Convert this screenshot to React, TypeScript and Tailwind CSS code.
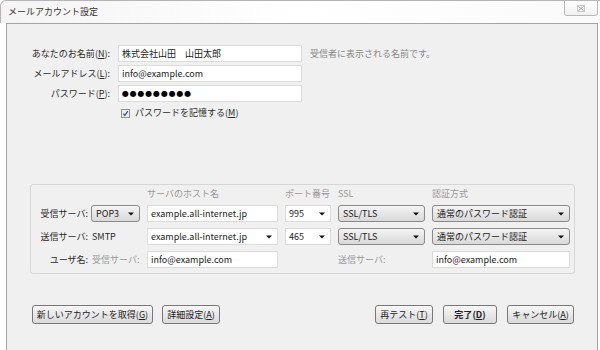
import React from 'react';

const font = "font-['Noto_Sans_CJK_JP','Noto_Sans',sans-serif]";

function Arrow() {
  return (
    <svg width="6" height="4" viewBox="0 0 6 4" className="shrink-0">
      <path d="M0 0.5h6L3 3.5z" fill="#111" />
    </svg>
  );
}

function Key({ k }: { k: string }) {
  return (
    <>
      (<span className="underline">{k}</span>)
    </>
  );
}

function Btn({ children, w, bold }: { children: React.ReactNode; w: string; bold?: boolean }) {
  return (
    <div
      className={`flex h-[19px] items-center justify-center rounded-[3px] border border-[#777] bg-linear-to-b from-[#f7f7f7] to-[#dadada] text-[9px] text-[#222] ${w} ${
        bold ? 'font-bold' : ''
      }`}
    >
      {children}
    </div>
  );
}

function DropBtn({ label }: { label: string }) {
  return (
    <div className="flex h-[17px] items-center justify-between rounded-[3px] border border-[#8a8a8a] bg-linear-to-b from-[#f4f4f4] to-[#d9d9d9] pl-[4px] pr-[5px] text-[9px] text-[#222]">
      <span>{label}</span>
      <Arrow />
    </div>
  );
}

function DropField({ label }: { label: string }) {
  return (
    <div className="flex h-[17px] items-center justify-between border border-[#dcdcdc] bg-white pl-[3px] pr-[5px] text-[9px] text-[#222]">
      <span>{label}</span>
      <Arrow />
    </div>
  );
}

function Field({ children }: { children: React.ReactNode }) {
  return (
    <div className="flex h-[17px] items-center border border-[#dcdcdc] bg-white pl-[3px] text-[9px] text-[#222]">
      {children}
    </div>
  );
}

export default function App() {
  return (
    <div className={`flex h-[350px] w-[600px] flex-col overflow-hidden bg-white ${font}`}>
      {/* title bar */}
      <div className="relative h-[23px] shrink-0 rounded-tl-[6px] border-l border-t border-[#b4b4b4] bg-linear-to-r from-[#f4f4f4] via-white to-[#fafafa]">
        <span className="absolute left-[7px] top-[5px] text-[9px] leading-[11px] text-[#333]">メールアカウント設定</span>
        <div className="absolute right-[2px] top-[-1px] flex h-[16px] w-[34px] items-center justify-center rounded-b-[3px] border border-[#b8b8b8] bg-linear-to-b from-white to-[#f1f1f1]">
          <svg width="8" height="7" viewBox="0 0 8 7">
            <rect x="0.5" y="0.5" width="7" height="6" fill="none" stroke="#c8c8c8" />
            <path d="M1.5 1.5l5 4M6.5 1.5l-5 4" stroke="#a8a8a8" strokeWidth="1" />
          </svg>
        </div>
      </div>

      {/* content panel */}
      <div className="ml-[6px] mr-[2px] h-[340px] shrink-0 border border-[#a4a4a4] bg-[#f0f0f0] text-[#2a2a2a]">
        <div className="grid grid-cols-[103px_184px_auto] items-center gap-x-[8px] gap-y-[3px] pt-[21px] text-[9px]">
          <span className="text-right">
            あなたのお名前<Key k="N" />:
          </span>
          <Field>株式会社山田　山田太郎</Field>
          <span className="text-[#888]">受信者に表示される名前です。</span>

          <span className="text-right">
            メールアドレス<Key k="L" />:
          </span>
          <Field>info@example.com</Field>
          <span />

          <span className="text-right">
            パスワード<Key k="P" />:
          </span>
          <Field>
            <span className="font-['DejaVu_Sans',sans-serif] text-[8px] tracking-[0.8px] text-black">●●●●●●●●●</span>
          </Field>
          <span />
        </div>

        <div className="mt-[5px] flex h-[12px] items-center gap-[5px] pl-[114px] text-[9px]">
          <svg width="9" height="9" viewBox="0 0 9 9">
            <rect x="0.5" y="0.5" width="8" height="8" fill="#e9edf2" stroke="#8f8f8f" />
            <path d="M2.3 4.6l1.5 1.8L6.8 2.2" fill="none" stroke="#3b4f86" strokeWidth="1.2" />
          </svg>
          <span>
            パスワードを記憶する<Key k="M" />
          </span>
        </div>

        {/* server settings */}
        <div className="ml-[23px] mt-[65px] w-[545px] rounded-[3px] border border-[#d6d6d6] pb-[5px] pt-[4px]">
          <div className="grid grid-cols-[53px_49px_131px_46px_87px_138px] items-center gap-x-[7px] gap-y-[6px] text-[9px]">
            <span className="h-[10px]" />
            <span />
            <span className="leading-[10px] text-[#999]">サーバのホスト名</span>
            <span className="leading-[10px] text-[#999]">ポート番号</span>
            <span className="leading-[10px] text-[#999]">SSL</span>
            <span className="leading-[10px] text-[#999]">認証方式</span>

            <span className="-mr-[4px] text-right">受信サーバ:</span>
            <DropBtn label="POP3" />
            <Field>example.all-internet.jp</Field>
            <DropField label="995" />
            <DropBtn label="SSL/TLS" />
            <DropBtn label="通常のパスワード認証" />

            <span className="-mr-[4px] text-right">送信サーバ:</span>
            <span className="pl-[1px]">SMTP</span>
            <DropField label="example.all-internet.jp" />
            <DropField label="465" />
            <DropBtn label="SSL/TLS" />
            <DropBtn label="通常のパスワード認証" />

            <span className="-mr-[4px] text-right">ユーザ名:</span>
            <span className="pl-[1px] text-[#999]">受信サーバ:</span>
            <Field>info@example.com</Field>
            <span />
            <span className="text-[#999]">送信サーバ:</span>
            <Field>info@example.com</Field>
          </div>
        </div>

        {/* buttons */}
        <div className="mt-[31px] flex justify-between pl-[25px] pr-[23px]">
          <div className="flex gap-[9px]">
            <Btn w="w-[121px]">
              新しいアカウントを取得<Key k="G" />
            </Btn>
            <Btn w="w-[58px]">
              詳細設定<Key k="A" />
            </Btn>
          </div>
          <div className="flex gap-[10px]">
            <Btn w="w-[58px]">
              再テスト<Key k="T" />
            </Btn>
            <Btn w="w-[54px]" bold>
              完了<Key k="D" />
            </Btn>
            <Btn w="w-[67px]">
              キャンセル<Key k="A" />
            </Btn>
          </div>
        </div>
      </div>
    </div>
  );
}
